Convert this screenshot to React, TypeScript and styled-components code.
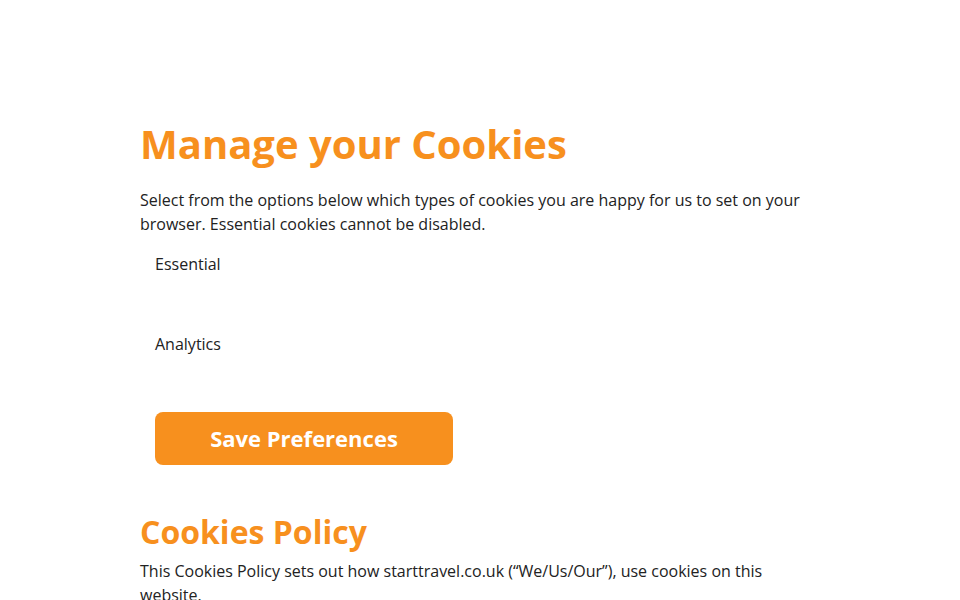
import styled, { createGlobalStyle } from "styled-components";

const GlobalStyle = createGlobalStyle`
  html, body {
    margin: 0;
    padding: 0;
    background: #ffffff;
  }
  body {
    font-family: "Open Sans", "Noto Sans", Arial, sans-serif;
    color: #222222;
  }
`;

const options = ["Essential", "Analytics"];

const App: React.FC = () => {
  return (
    <>
      <GlobalStyle />
      <Page>
        <Content>
          <Title>Manage your Cookies</Title>
          <Intro>
            Select from the options below which types of cookies you are happy
            for us to set on your browser. Essential cookies cannot be disabled.
          </Intro>

          <Options>
            {options.map((name) => (
              <OptionRow key={name}>
                <OptionLabel>{name}</OptionLabel>
              </OptionRow>
            ))}
          </Options>

          <SaveButton type="button">Save Preferences</SaveButton>

          <SubTitle>Cookies Policy</SubTitle>
          <Paragraph>
            This Cookies Policy sets out how starttravel.co.uk (“We/Us/Our”),
            use cookies on this website.
          </Paragraph>
        </Content>
      </Page>
    </>
  );
};

export default App;

const Page = styled.div`
  width: 100%;
  display: flex;
  justify-content: center;
  padding-top: 120px;
`;

const Content = styled.main`
  width: 680px;
  display: flex;
  flex-direction: column;
  align-items: flex-start;
`;

const Title = styled.h1`
  margin: 0;
  font-size: 40px;
  line-height: 48px;
  font-weight: 700;
  color: #f7901e;
`;

const Intro = styled.p`
  margin: 20px 0 0;
  font-size: 16px;
  line-height: 24px;
  color: #222222;
`;

const Options = styled.div`
  margin-top: 16px;
  padding-left: 15px;
  display: flex;
  flex-direction: column;
`;

const OptionRow = styled.div`
  height: 80px;
`;

const OptionLabel = styled.label`
  display: block;
  font-size: 16px;
  line-height: 24px;
  color: #222222;
`;

const SaveButton = styled.button`
  margin-left: 15px;
  width: 298px;
  height: 53px;
  padding: 0 0 2px;
  border: none;
  border-radius: 8px;
  background-color: #f7901e;
  color: #ffffff;
  font-family: "Open Sans", "Noto Sans", Arial, sans-serif;
  font-size: 22px;
  font-weight: 700;
  cursor: pointer;
`;

const SubTitle = styled.h2`
  margin: 48px 0 0;
  font-size: 32px;
  line-height: 38px;
  font-weight: 700;
  color: #f7901e;
`;

const Paragraph = styled.p`
  margin: 8px 0 0;
  font-size: 16px;
  line-height: 24px;
  color: #222222;
`;
